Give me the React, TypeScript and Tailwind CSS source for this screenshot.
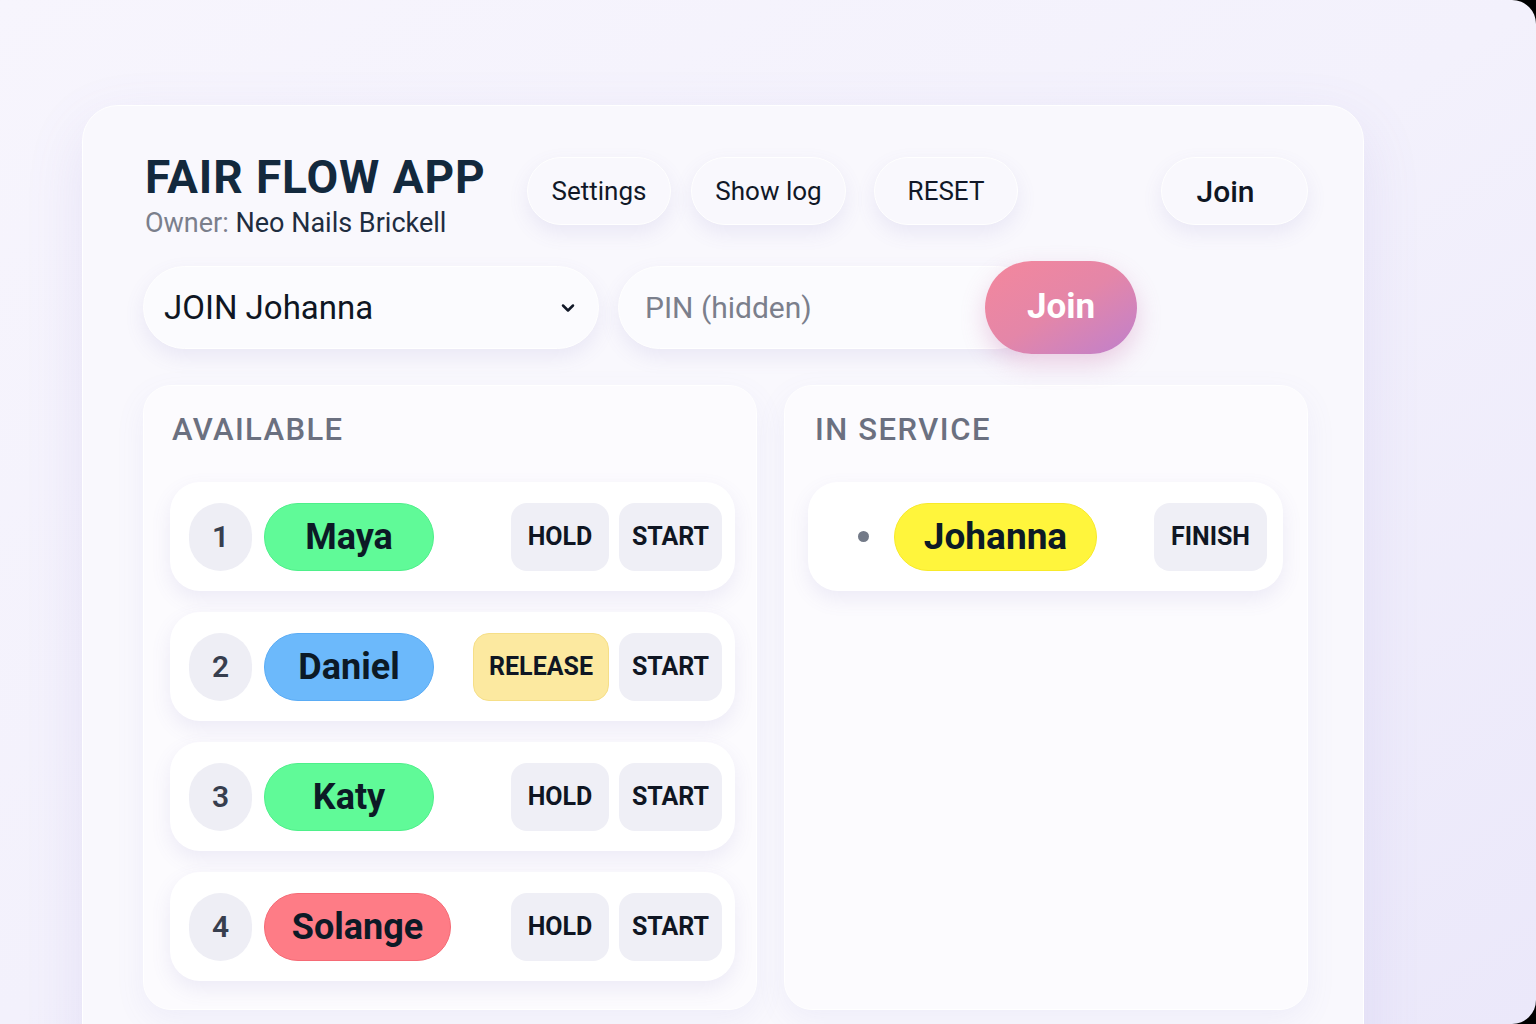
import React from "react";

const font = { fontFamily: "Roboto, 'Noto Sans', 'Liberation Sans', sans-serif" };

type Row = { n: number; name: string; color: string; pillW: string; hold: boolean };

const rows: Row[] = [
  { n: 1, name: "Maya", color: "bg-[#60fa98] border-[#4ef08a]", pillW: "w-[170px]", hold: true },
  { n: 2, name: "Daniel", color: "bg-[#6cb9fb] border-[#5aacf5]", pillW: "w-[170px]", hold: false },
  { n: 3, name: "Katy", color: "bg-[#60fa98] border-[#4ef08a]", pillW: "w-[170px]", hold: true },
  { n: 4, name: "Solange", color: "bg-[#fe7c86] border-[#f56a75]", pillW: "w-[187px]", hold: true },
];

const softShadow = "shadow-[0_8px_20px_rgba(110,100,180,0.11)]";

function ActionBtn({ label, w, yellow }: { label: string; w: string; yellow?: boolean }) {
  return (
    <div
      className={`${w} h-[68px] rounded-[16px] flex items-center justify-center text-[25px] font-bold text-[#0f1623] ${
        yellow ? "bg-[#fce9a0] border border-[#f6df88]" : "bg-[#efeff6]"
      }`}
    >
      {label}
    </div>
  );
}

export default function App() {
  return (
    <div className="w-[1536px] h-[1024px] bg-black overflow-hidden" style={font}>
      <div className="w-full h-full rounded-r-[24px] bg-gradient-to-br from-[#f7f5fd] via-[#f3f1fc] to-[#ebe8fa] pl-[82px] pt-[105px] pr-[172px]">
        <div className="w-full h-[1000px] rounded-[36px] bg-[#f9f8fd] border border-white shadow-[0_20px_60px_rgba(120,110,200,0.12)] pt-[49px] pl-[60px] pr-[55px]">
          {/* header */}
          <div className="flex items-start h-[111px]">
            <div className="w-[384px]">
              <div className="pl-[2px] text-[46px] leading-[45px] font-bold tracking-[0.02em] text-[#13293d]">
                FAIR FLOW APP
              </div>
              <div className="mt-[8px] text-[27px] leading-[30px] pl-[2px]">
                <span className="text-[#7b7f8c]">Owner: </span>
                <span className="text-[#1f2d40]">Neo Nails Brickell</span>
              </div>
            </div>
            <div className={`mt-[2px] w-[144px] h-[68px] rounded-full bg-[#f9f8fd] border border-white ${softShadow} flex items-center justify-center text-[26px] text-[#111827]`}>
              Settings
            </div>
            <div className={`mt-[2px] ml-[20px] w-[155px] h-[68px] rounded-full bg-[#f9f8fd] border border-white ${softShadow} flex items-center justify-center text-[26px] text-[#111827]`}>
              Show log
            </div>
            <div className={`mt-[2px] ml-[28px] w-[144px] h-[68px] rounded-full bg-[#f9f8fd] border border-white ${softShadow} flex items-center justify-center text-[26px] text-[#111827]`}>
              RESET
            </div>
            <div className={`mt-[2px] ml-auto w-[147px] h-[68px] rounded-full bg-[#f9f8fd] border border-white ${softShadow} flex items-center justify-center pr-[18px] text-[30px] font-medium text-[#0f1623]`}>
              Join
            </div>
          </div>

          {/* join row */}
          <div className="flex items-center h-[83px]">
            <div className={`w-[456px] h-[83px] rounded-full bg-[#fbfbfe] border border-white ${softShadow} flex items-center pl-[20px] pr-[20px]`}>
              <span className="text-[33px] text-[#0f1623]">JOIN Johanna</span>
              <svg className="ml-auto" width="20" height="20" viewBox="0 0 24 24" fill="none" stroke="#111827" strokeWidth="3" strokeLinecap="round" strokeLinejoin="round">
                <path d="M6 9l6 6 6-6" />
              </svg>
            </div>
            <div className={`ml-[19px] w-[420px] h-[83px] rounded-full bg-[#fbfbfe] border border-white ${softShadow} flex items-center pl-[26px]`}>
              <span className="text-[30px] text-[#7b7f8c]">PIN (hidden)</span>
            </div>
            <div className="-ml-[53px] relative w-[152px] h-[93px] rounded-full bg-gradient-to-br from-[#f4879c] via-[#e486a8] to-[#bf7fcc] shadow-[0_10px_24px_rgba(200,110,170,0.30)] flex items-center justify-center text-[35px] font-bold text-white">
              Join
            </div>
          </div>

          {/* panels */}
          <div className="mt-[36px] flex gap-[27px]">
            <div className="w-[614px] h-[625px] rounded-[28px] bg-[#fcfbfe] border border-white shadow-[0_10px_30px_rgba(120,110,200,0.08)] pt-[26px] pl-[26px] pr-[21px]">
              <div className="pl-[2px] text-[31px] leading-[36px] font-medium tracking-[0.045em] text-[#6b7080]">AVAILABLE</div>
              <div className="mt-[34px] flex flex-col gap-[21px]">
                {rows.map((r) => (
                  <div
                    key={r.n}
                    className={`h-[109px] rounded-[30px] bg-white ${softShadow} flex items-center pl-[19px] pr-[13px]`}
                  >
                    <div className="w-[63px] h-[68px] rounded-full bg-[#eeeef5] flex items-center justify-center text-[30px] font-semibold text-[#373e4e]">
                      {r.n}
                    </div>
                    <div
                      className={`ml-[12px] ${r.pillW} h-[68px] rounded-full border ${r.color} flex items-center justify-center text-[36px] font-bold text-[#0c1a26]`}
                    >
                      {r.name}
                    </div>
                    <div className="ml-auto flex gap-[10px]">
                      {r.hold ? (
                        <ActionBtn label="HOLD" w="w-[98px]" />
                      ) : (
                        <ActionBtn label="RELEASE" w="w-[136px]" yellow />
                      )}
                      <ActionBtn label="START" w="w-[103px]" />
                    </div>
                  </div>
                ))}
              </div>
            </div>

            <div className="w-[524px] h-[625px] rounded-[28px] bg-[#fcfbfe] border border-white shadow-[0_10px_30px_rgba(120,110,200,0.08)] pt-[26px] pl-[23px] pr-[24px]">
              <div className="pl-[7px] text-[31px] leading-[36px] font-medium tracking-[0.05em] text-[#6b7080]">IN SERVICE</div>
              <div className="mt-[34px]">
                <div className={`h-[109px] rounded-[30px] bg-white ${softShadow} flex items-center pl-[50px] pr-[16px]`}>
                  <div className="w-[11px] h-[11px] rounded-full bg-[#737a88]" />
                  <div className="ml-[25px] w-[203px] h-[68px] rounded-full bg-[#fff53c] border border-[#f8ea2a] flex items-center justify-center text-[37px] font-bold text-[#0c1a26]">
                    Johanna
                  </div>
                  <div className="ml-auto">
                    <ActionBtn label="FINISH" w="w-[113px]" />
                  </div>
                </div>
              </div>
            </div>
          </div>
        </div>
      </div>
    </div>
  );
}
